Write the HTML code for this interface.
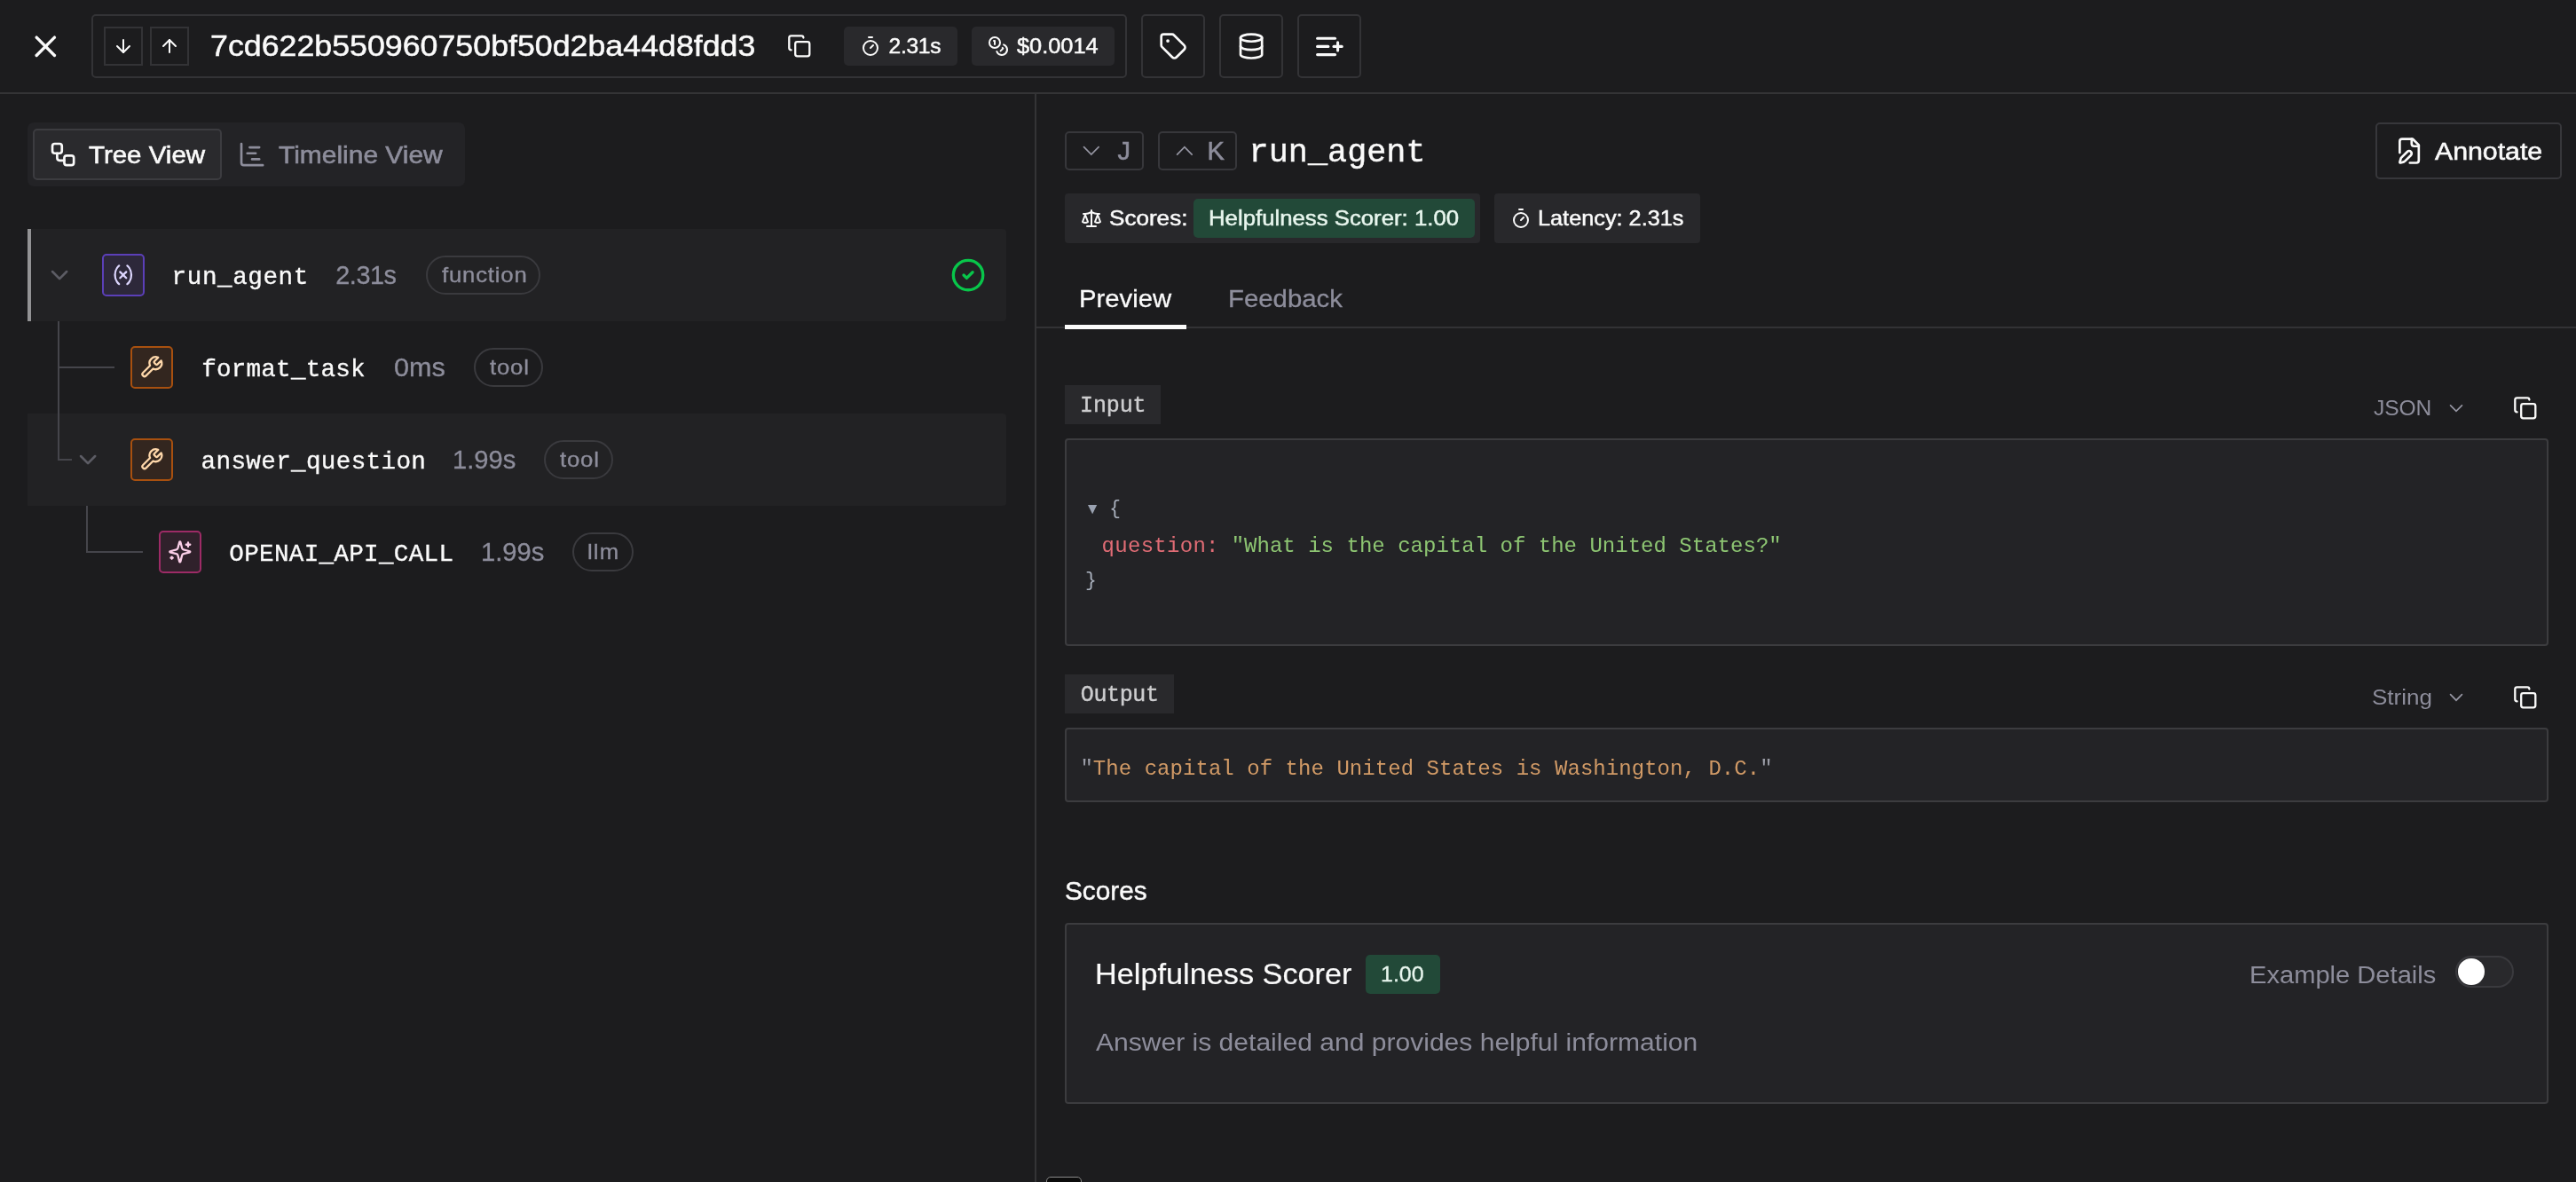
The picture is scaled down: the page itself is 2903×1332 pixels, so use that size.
<!DOCTYPE html>
<html lang="en"><head><meta charset="utf-8"><title>Trace</title><style>
html,body{margin:0;padding:0;background:#1c1c1e;}
body{width:2903px;height:1332px;position:relative;overflow:hidden;font-family:"Liberation Sans", sans-serif;}
header,nav,main{position:absolute;left:0;top:0;width:0;height:0}
.bx{position:absolute;box-sizing:border-box}
.ic{position:absolute;overflow:visible}
.t{position:absolute;white-space:pre;transform-origin:0 0;}
#txt{position:absolute;left:0;top:0;width:2903px;height:1332px;will-change:transform}
</style></head><body>
<header>
<svg class="ic" style="left:30.50px;top:31.70px;color:#fafafa" width="40.6" height="40.6" viewBox="0 0 24 24" fill="none" stroke="currentColor" stroke-width="2" stroke-linecap="round" stroke-linejoin="round"><path d="M18 6 6 18"/><path d="m6 6 12 12"/></svg>
<div class="bx" style="left:103.00px;top:16.00px;width:1167.00px;height:72.00px;border:2px solid #333336;border-radius:5px"></div>
<div class="bx" style="left:117.00px;top:30.00px;width:44.00px;height:44.00px;border:2px solid #333336"></div>
<div class="bx" style="left:169.00px;top:30.00px;width:44.00px;height:44.00px;border:2px solid #333336"></div>
<svg class="ic" style="left:126.80px;top:40.10px;color:#fafafa" width="24" height="24" viewBox="0 0 24 24" fill="none" stroke="currentColor" stroke-width="2" stroke-linecap="round" stroke-linejoin="round"><path d="M12 5v14"/><path d="m19 12-7 7-7-7"/></svg>
<svg class="ic" style="left:178.80px;top:40.10px;color:#fafafa" width="24" height="24" viewBox="0 0 24 24" fill="none" stroke="currentColor" stroke-width="2" stroke-linecap="round" stroke-linejoin="round"><path d="m5 12 7-7 7 7"/><path d="M12 19V5"/></svg>
<svg class="ic" style="left:886.70px;top:38.10px;color:#fafafa" width="27.6" height="27.6" viewBox="0 0 24 24" fill="none" stroke="currentColor" stroke-width="2" stroke-linecap="round" stroke-linejoin="round"><rect width="14" height="14" x="8" y="8" rx="2" ry="2"/><path d="M4 16c-1.1 0-2-.9-2-2V4c0-1.1.9-2 2-2h10c1.1 0 2 .9 2 2"/></svg>
<div class="bx" style="left:951.00px;top:30.00px;width:128.00px;height:44.00px;background:#29292c;border-radius:5px"></div>
<svg class="ic" style="left:968.70px;top:39.70px;color:#fafafa" width="24" height="24" viewBox="0 0 24 24" fill="none" stroke="currentColor" stroke-width="2" stroke-linecap="round" stroke-linejoin="round"><line x1="10" x2="14" y1="2" y2="2"/><line x1="12" x2="15" y1="14" y2="11"/><circle cx="12" cy="14" r="8"/></svg>
<div class="bx" style="left:1095.00px;top:30.00px;width:161.00px;height:44.00px;background:#29292c;border-radius:5px"></div>
<svg class="ic" style="left:1112.60px;top:40.00px;color:#fafafa" width="24" height="24" viewBox="0 0 24 24" fill="none" stroke="currentColor" stroke-width="2" stroke-linecap="round" stroke-linejoin="round"><circle cx="8" cy="8" r="6"/><path d="M18.09 10.37A6 6 0 1 1 10.34 18"/><path d="M7 6h1v4"/><path d="m16.71 13.88.7.71-2.82 2.82"/></svg>
<div class="bx" style="left:1286.00px;top:16.00px;width:72.00px;height:72.00px;border:2px solid #333336;border-radius:5px"></div>
<svg class="ic" style="left:1305.90px;top:35.90px;color:#fafafa" width="32.2" height="32.2" viewBox="0 0 24 24" fill="none" stroke="currentColor" stroke-width="2" stroke-linecap="round" stroke-linejoin="round"><path d="M12.586 2.586A2 2 0 0 0 11.172 2H4a2 2 0 0 0-2 2v7.172a2 2 0 0 0 .586 1.414l8.704 8.704a2.426 2.426 0 0 0 3.42 0l6.58-6.58a2.426 2.426 0 0 0 0-3.42z"/><circle cx="7.5" cy="7.5" r="1.4" fill="currentColor" stroke="none"/></svg>
<div class="bx" style="left:1374.00px;top:16.00px;width:72.00px;height:72.00px;border:2px solid #333336;border-radius:5px"></div>
<svg class="ic" style="left:1393.90px;top:35.90px;color:#fafafa" width="32.2" height="32.2" viewBox="0 0 24 24" fill="none" stroke="currentColor" stroke-width="2" stroke-linecap="round" stroke-linejoin="round"><ellipse cx="12" cy="5" rx="9" ry="3"/><path d="M3 5V19A9 3 0 0 0 21 19V5"/><path d="M3 12A9 3 0 0 0 21 12"/></svg>
<div class="bx" style="left:1462.00px;top:16.00px;width:72.00px;height:72.00px;border:2px solid #333336;border-radius:5px"></div>
<svg class="ic" style="left:1479.60px;top:33.60px;color:#fafafa" width="36.8" height="36.8" viewBox="0 0 24 24" fill="none" stroke="currentColor" stroke-width="2" stroke-linecap="round" stroke-linejoin="round"><path d="M11 12H3"/><path d="M16 6H3"/><path d="M16 18H3"/><path d="M18 9v6"/><path d="M21 12h-6"/></svg>
<div class="bx" style="left:0.00px;top:104.00px;width:2903.00px;height:2.00px;background:#343436"></div>
</header>
<nav>
<div class="bx" style="left:31.00px;top:138.00px;width:493.00px;height:72.00px;background:#232326;border-radius:7px"></div>
<div class="bx" style="left:37.00px;top:145.00px;width:213.00px;height:58.00px;background:#2a2a2d;border:2px solid #3c3c40;border-radius:5px"></div>
<svg class="ic" style="left:54.60px;top:158.00px;color:#fafafa" width="32.2" height="32.2" viewBox="0 0 24 24" fill="none" stroke="currentColor" stroke-width="2" stroke-linecap="round" stroke-linejoin="round"><rect width="8" height="8" x="3" y="3" rx="2"/><path d="M7 11v4a2 2 0 0 0 2 2h4"/><rect width="8" height="8" x="13" y="13" rx="2"/></svg>
<svg class="ic" style="left:268.20px;top:158.00px;color:#8d8d9b" width="32.2" height="32.2" viewBox="0 0 24 24" fill="none" stroke="currentColor" stroke-width="2" stroke-linecap="round" stroke-linejoin="round"><path d="M10 6h8"/><path d="M12 16h6"/><path d="M3 3v16a2 2 0 0 0 2 2h16"/><path d="M8 11h7"/></svg>
<div class="bx" style="left:31.00px;top:258.00px;width:1103.00px;height:104.00px;background:#222224;border-radius:0 4px 4px 0"></div>
<div class="bx" style="left:31.00px;top:258.00px;width:4.00px;height:104.00px;background:#939395"></div>
<div class="bx" style="left:31.00px;top:466.00px;width:1103.00px;height:104.00px;background:#222224;border-radius:0 4px 4px 0"></div>
<div class="bx" style="left:65.00px;top:362.00px;width:2.00px;height:156.80px;background:#45454b"></div>
<div class="bx" style="left:65.00px;top:413.00px;width:64.00px;height:2.00px;background:#45454b"></div>
<div class="bx" style="left:65.00px;top:516.60px;width:16.20px;height:2.20px;background:#45454b"></div>
<div class="bx" style="left:97.00px;top:570.00px;width:2.30px;height:53.00px;background:#45454b"></div>
<div class="bx" style="left:97.00px;top:620.80px;width:64.00px;height:2.20px;background:#45454b"></div>
<svg class="ic" style="left:50.90px;top:294.00px;color:#5c5c64" width="32.2" height="32.2" viewBox="0 0 24 24" fill="none" stroke="currentColor" stroke-width="2" stroke-linecap="round" stroke-linejoin="round"><path d="m6 9 6 6 6-6"/></svg>
<svg class="ic" style="left:82.90px;top:501.90px;color:#5c5c64" width="32.2" height="32.2" viewBox="0 0 24 24" fill="none" stroke="currentColor" stroke-width="2" stroke-linecap="round" stroke-linejoin="round"><path d="m6 9 6 6 6-6"/></svg>
<div class="bx" style="left:115.00px;top:286.00px;width:48.00px;height:48.00px;background:#2d283a;border:2.3px solid #5b3fb8;border-radius:5px"></div>
<svg class="ic" style="left:125.20px;top:296.20px;color:#ddd6fe" width="27.6" height="27.6" viewBox="0 0 24 24" fill="none" stroke="currentColor" stroke-width="2" stroke-linecap="round" stroke-linejoin="round"><path d="M8 21s-4-3-4-9 4-9 4-9"/><path d="M16 3s4 3 4 9-4 9-4 9"/><line x1="15" x2="9" y1="9" y2="15"/><line x1="9" x2="15" y1="9" y2="15"/></svg>
<div class="bx" style="left:147.00px;top:390.00px;width:48.00px;height:48.00px;background:#33261f;border:2.3px solid #a8500f;border-radius:5px"></div>
<svg class="ic" style="left:157.20px;top:400.20px;color:#fed7aa" width="27.6" height="27.6" viewBox="0 0 24 24" fill="none" stroke="currentColor" stroke-width="2" stroke-linecap="round" stroke-linejoin="round"><path d="M14.7 6.3a1 1 0 0 0 0 1.4l1.6 1.6a1 1 0 0 0 1.4 0l3.77-3.77a6 6 0 0 1-7.94 7.94l-6.91 6.91a2.12 2.12 0 0 1-3-3l6.91-6.91a6 6 0 0 1 7.94-7.94l-3.76 3.76z"/></svg>
<div class="bx" style="left:147.00px;top:494.00px;width:48.00px;height:48.00px;background:#33261f;border:2.3px solid #a8500f;border-radius:5px"></div>
<svg class="ic" style="left:157.20px;top:504.20px;color:#fed7aa" width="27.6" height="27.6" viewBox="0 0 24 24" fill="none" stroke="currentColor" stroke-width="2" stroke-linecap="round" stroke-linejoin="round"><path d="M14.7 6.3a1 1 0 0 0 0 1.4l1.6 1.6a1 1 0 0 0 1.4 0l3.77-3.77a6 6 0 0 1-7.94 7.94l-6.91 6.91a2.12 2.12 0 0 1-3-3l6.91-6.91a6 6 0 0 1 7.94-7.94l-3.76 3.76z"/></svg>
<div class="bx" style="left:179.00px;top:598.00px;width:48.00px;height:48.00px;background:#30212b;border:2.3px solid #9d2b66;border-radius:5px"></div>
<svg class="ic" style="left:189.20px;top:608.20px;color:#fbcfe8" width="27.6" height="27.6" viewBox="0 0 24 24" fill="none" stroke="currentColor" stroke-width="2" stroke-linecap="round" stroke-linejoin="round"><path d="M9.937 15.5A2 2 0 0 0 8.5 14.063l-6.135-1.582a.5.5 0 0 1 0-.962L8.5 9.936A2 2 0 0 0 9.937 8.5l1.582-6.135a.5.5 0 0 1 .963 0L14.063 8.5A2 2 0 0 0 15.5 9.937l6.135 1.581a.5.5 0 0 1 0 .964L15.5 14.063a2 2 0 0 0-1.437 1.437l-1.582 6.135a.5.5 0 0 1-.963 0z"/><path d="M20 3v4"/><path d="M22 5h-4"/><path d="M4 17v2"/><path d="M5 18H3"/></svg>
<div class="bx" style="left:480.40px;top:288.00px;width:129.10px;height:44.00px;border:2px solid #3a3a3e;border-radius:22px"></div>
<div class="bx" style="left:534.20px;top:392.00px;width:78.20px;height:44.00px;border:2px solid #3a3a3e;border-radius:22px"></div>
<div class="bx" style="left:613.40px;top:496.00px;width:77.90px;height:44.00px;border:2px solid #3a3a3e;border-radius:22px"></div>
<div class="bx" style="left:645.30px;top:600.00px;width:69.00px;height:44.00px;border:2px solid #3a3a3e;border-radius:22px"></div>
<svg class="ic" style="left:1071.15px;top:289.75px;color:#08c64a" width="40.1" height="40.1" viewBox="0 0 24 24" fill="none" stroke="currentColor" stroke-width="2" stroke-linecap="round" stroke-linejoin="round"><circle cx="12" cy="12" r="10"/><path d="m9 12 2 2 4-4"/></svg>
<div class="bx" style="left:1166.00px;top:106.00px;width:2.00px;height:1226.00px;background:#343436"></div>
</nav>
<main>
<div class="bx" style="left:1200.00px;top:148.00px;width:89.00px;height:44.00px;border:2px solid #37373b;border-radius:5px"></div>
<div class="bx" style="left:1305.00px;top:148.00px;width:89.00px;height:44.00px;border:2px solid #37373b;border-radius:5px"></div>
<svg class="ic" style="left:0;top:0" width="2903" height="1332" viewBox="0 0 2903 1332" fill="none" stroke="#9595a2" stroke-width="1.7" stroke-linecap="round" stroke-linejoin="miter"><path d="M1221.50 165.65 1229.80 174.15 1238.10 165.65"/></svg>
<svg class="ic" style="left:0;top:0" width="2903" height="1332" viewBox="0 0 2903 1332" fill="none" stroke="#9595a2" stroke-width="1.7" stroke-linecap="round" stroke-linejoin="miter"><path d="M1326.60 174.15 1334.90 165.65 1343.20 174.15"/></svg>
<div class="bx" style="left:2677.00px;top:138.00px;width:210.00px;height:64.00px;border:2px solid #37373b;border-radius:5px"></div>
<svg class="ic" style="left:2698.80px;top:154.20px;color:#fafafa" width="32.2" height="32.2" viewBox="0 0 24 24" fill="none" stroke="currentColor" stroke-width="2" stroke-linecap="round" stroke-linejoin="round"><path d="M12.5 22H18a2 2 0 0 0 2-2V7l-5-5H6a2 2 0 0 0-2 2v9.5"/><path d="M14 2v4a2 2 0 0 0 2 2h4"/><path d="M13.378 15.626a1 1 0 1 0-3.004-3.004l-5.01 5.012a2 2 0 0 0-.506.854l-.837 2.87a.5.5 0 0 0 .62.62l2.87-.837a2 2 0 0 0 .854-.506z"/></svg>
<div class="bx" style="left:1200.00px;top:218.00px;width:468.00px;height:56.00px;background:#28282b;border-radius:4px"></div>
<svg class="ic" style="left:1217.80px;top:234.30px;color:#fafafa" width="24" height="24" viewBox="0 0 24 24" fill="none" stroke="currentColor" stroke-width="2" stroke-linecap="round" stroke-linejoin="round"><path d="m16 16 3-8 3 8c-.87.65-1.92 1-3 1s-2.13-.35-3-1Z"/><path d="m2 16 3-8 3 8c-.87.65-1.92 1-3 1s-2.13-.35-3-1Z"/><path d="M7 21h10"/><path d="M12 3v18"/><path d="M3 7h2c2 0 5-1 7-2 2 1 5 2 7 2h2"/></svg>
<div class="bx" style="left:1345.20px;top:224.00px;width:316.50px;height:44.00px;background:#224938;border-radius:5px"></div>
<div class="bx" style="left:1684.00px;top:218.00px;width:232.00px;height:56.00px;background:#28282b;border-radius:4px"></div>
<svg class="ic" style="left:1702.00px;top:234.00px;color:#fafafa" width="24" height="24" viewBox="0 0 24 24" fill="none" stroke="currentColor" stroke-width="2" stroke-linecap="round" stroke-linejoin="round"><line x1="10" x2="14" y1="2" y2="2"/><line x1="12" x2="15" y1="14" y2="11"/><circle cx="12" cy="14" r="8"/></svg>
<div class="bx" style="left:1168.00px;top:368.00px;width:1735.00px;height:2.00px;background:#323235"></div>
<div class="bx" style="left:1200.00px;top:366.40px;width:137.00px;height:4.60px;background:#fafafa"></div>
<div class="bx" style="left:1200.00px;top:434.00px;width:108.00px;height:44.00px;background:#29292c"></div>
<svg class="ic" style="left:0;top:0" width="2903" height="1332" viewBox="0 0 2903 1332" fill="none" stroke="#9595a2" stroke-width="1.7" stroke-linecap="round" stroke-linejoin="miter"><path d="M2761.55 456.80 2768.00 463.40 2774.45 456.80"/></svg>
<svg class="ic" style="left:2832.30px;top:446.30px;color:#fafafa" width="27.6" height="27.6" viewBox="0 0 24 24" fill="none" stroke="currentColor" stroke-width="2" stroke-linecap="round" stroke-linejoin="round"><rect width="14" height="14" x="8" y="8" rx="2" ry="2"/><path d="M4 16c-1.1 0-2-.9-2-2V4c0-1.1.9-2 2-2h10c1.1 0 2 .9 2 2"/></svg>
<div class="bx" style="left:1200.00px;top:494.00px;width:1672.00px;height:234.00px;background:#232326;border:2px solid #3c3c3f;border-radius:4px"></div>
<div class="bx" style="left:1200.00px;top:760.00px;width:123.00px;height:44.00px;background:#29292c"></div>
<svg class="ic" style="left:0;top:0" width="2903" height="1332" viewBox="0 0 2903 1332" fill="none" stroke="#9595a2" stroke-width="1.7" stroke-linecap="round" stroke-linejoin="miter"><path d="M2761.55 782.60 2768.00 789.20 2774.45 782.60"/></svg>
<svg class="ic" style="left:2832.30px;top:772.20px;color:#fafafa" width="27.6" height="27.6" viewBox="0 0 24 24" fill="none" stroke="currentColor" stroke-width="2" stroke-linecap="round" stroke-linejoin="round"><rect width="14" height="14" x="8" y="8" rx="2" ry="2"/><path d="M4 16c-1.1 0-2-.9-2-2V4c0-1.1.9-2 2-2h10c1.1 0 2 .9 2 2"/></svg>
<div class="bx" style="left:1200.00px;top:820.00px;width:1672.00px;height:84.00px;background:#232326;border:2px solid #3c3c3f;border-radius:4px"></div>
<div class="bx" style="left:1200.00px;top:1040.00px;width:1672.00px;height:204.00px;background:#232326;border:2px solid #3c3c3f;border-radius:4px"></div>
<div class="bx" style="left:1539.10px;top:1076.20px;width:83.90px;height:43.60px;background:#224938;border-radius:5px"></div>
<div class="bx" style="left:2766.90px;top:1077.10px;width:65.90px;height:35.80px;background:#29292c;border:2.3px solid #3a3a3e;border-radius:18px"></div>
<div class="bx" style="left:2769.70px;top:1079.90px;width:30.50px;height:30.30px;background:#fff;border-radius:50%"></div>
<div class="bx" style="left:1179.00px;top:1326.00px;width:40.00px;height:19.00px;background:#0b0b0b;border:1.4px solid #8a8a8a;border-radius:5px"></div>
</main>
<div id="txt">
<span class="t" style="left:236.52px;top:34.90px;font:400 33.2px/33.2px 'Liberation Sans', sans-serif;color:#fafafa;letter-spacing:0.000px;transform:scaleX(1.0773);-webkit-text-stroke:0.5px #fafafa;">7cd622b550960750bf50d2ba44d8fdd3</span>
<span class="t" style="left:1001.50px;top:39.70px;font:400 24.6px/24.6px 'Liberation Sans', sans-serif;color:#fafafa;letter-spacing:-0.295px;-webkit-text-stroke:0.5px #fafafa;">2.31s</span>
<span class="t" style="left:1145.99px;top:39.70px;font:400 24.6px/24.6px 'Liberation Sans', sans-serif;color:#fafafa;letter-spacing:0.000px;transform:scaleX(1.0313);-webkit-text-stroke:0.5px #fafafa;">$0.0014</span>
<span class="t" style="left:99.84px;top:160.10px;font:400 28.4px/28.4px 'Liberation Sans', sans-serif;color:#fafafa;letter-spacing:0.000px;transform:scaleX(1.0382);-webkit-text-stroke:0.6px #fafafa;">Tree View</span>
<span class="t" style="left:313.63px;top:160.10px;font:400 28.4px/28.4px 'Liberation Sans', sans-serif;color:#8d8d9b;letter-spacing:0.000px;transform:scaleX(1.0548);-webkit-text-stroke:0.6px #8d8d9b;">Timeline View</span>
<span class="t" style="left:193.58px;top:298.60px;font:400 27.6px/27.6px 'Liberation Mono', monospace;color:#fafafa;letter-spacing:0.590px;-webkit-text-stroke:0.35px #fafafa;">run_agent</span>
<span class="t" style="left:378.25px;top:295.60px;font:400 28.8px/28.8px 'Liberation Sans', sans-serif;color:#8d8d9b;letter-spacing:-0.426px;-webkit-text-stroke:0.3px #8d8d9b;">2.31s</span>
<span class="t" style="left:497.58px;top:298.20px;font:400 23.8px/23.8px 'Liberation Sans', sans-serif;color:#8d8d9b;letter-spacing:0.748px;transform:scaleX(1.0800);-webkit-text-stroke:0.35px #8d8d9b;">function</span>
<span class="t" style="left:227.18px;top:402.60px;font:400 27.6px/27.6px 'Liberation Mono', monospace;color:#fafafa;letter-spacing:0.227px;-webkit-text-stroke:0.35px #fafafa;">format_task</span>
<span class="t" style="left:443.74px;top:399.60px;font:400 28.8px/28.8px 'Liberation Sans', sans-serif;color:#8d8d9b;letter-spacing:0.000px;transform:scaleX(1.0626);-webkit-text-stroke:0.3px #8d8d9b;">0ms</span>
<span class="t" style="left:551.88px;top:402.20px;font:400 23.8px/23.8px 'Liberation Sans', sans-serif;color:#8d8d9b;letter-spacing:0.770px;transform:scaleX(1.0800);-webkit-text-stroke:0.35px #8d8d9b;">tool</span>
<span class="t" style="left:226.58px;top:506.60px;font:400 27.6px/27.6px 'Liberation Mono', monospace;color:#fafafa;letter-spacing:0.351px;-webkit-text-stroke:0.35px #fafafa;">answer_question</span>
<span class="t" style="left:509.68px;top:503.60px;font:400 28.8px/28.8px 'Liberation Sans', sans-serif;color:#8d8d9b;letter-spacing:0.000px;transform:scaleX(1.0125);-webkit-text-stroke:0.3px #8d8d9b;">1.99s</span>
<span class="t" style="left:631.08px;top:506.20px;font:400 23.8px/23.8px 'Liberation Sans', sans-serif;color:#8d8d9b;letter-spacing:0.770px;transform:scaleX(1.0800);-webkit-text-stroke:0.35px #8d8d9b;">tool</span>
<span class="t" style="left:258.31px;top:610.60px;font:400 27.6px/27.6px 'Liberation Mono', monospace;color:#fafafa;letter-spacing:0.309px;-webkit-text-stroke:0.35px #fafafa;">OPENAI_API_CALL</span>
<span class="t" style="left:541.68px;top:607.60px;font:400 28.8px/28.8px 'Liberation Sans', sans-serif;color:#8d8d9b;letter-spacing:0.000px;transform:scaleX(1.0125);-webkit-text-stroke:0.3px #8d8d9b;">1.99s</span>
<span class="t" style="left:662.27px;top:610.20px;font:400 23.8px/23.8px 'Liberation Sans', sans-serif;color:#8d8d9b;letter-spacing:1.038px;transform:scaleX(1.0800);-webkit-text-stroke:0.35px #8d8d9b;">llm</span>
<span class="t" style="left:1259.53px;top:156.30px;font:400 29px/29px 'Liberation Sans', sans-serif;color:#8d8d9b;letter-spacing:0.000px;-webkit-text-stroke:0.6px #8d8d9b;">J</span>
<span class="t" style="left:1360.55px;top:156.30px;font:400 29px/29px 'Liberation Sans', sans-serif;color:#8d8d9b;letter-spacing:0.000px;-webkit-text-stroke:0.6px #8d8d9b;">K</span>
<span class="t" style="left:1407.57px;top:154.40px;font:400 36.8px/36.8px 'Liberation Mono', monospace;color:#fafafa;letter-spacing:0.032px;-webkit-text-stroke:0.4px #fafafa;">run_agent</span>
<span class="t" style="left:2744.10px;top:155.70px;font:400 28.4px/28.4px 'Liberation Sans', sans-serif;color:#fafafa;letter-spacing:0.000px;transform:scaleX(1.0662);-webkit-text-stroke:0.6px #fafafa;">Annotate</span>
<span class="t" style="left:1250.23px;top:233.80px;font:400 24.6px/24.6px 'Liberation Sans', sans-serif;color:#fafafa;letter-spacing:-0.000px;transform:scaleX(1.0604);-webkit-text-stroke:0.5px #fafafa;">Scores:</span>
<span class="t" style="left:1361.81px;top:233.80px;font:400 24.6px/24.6px 'Liberation Sans', sans-serif;color:#e8f6ee;letter-spacing:0.000px;transform:scaleX(1.0473);-webkit-text-stroke:0.5px #e8f6ee;">Helpfulness Scorer: 1.00</span>
<span class="t" style="left:1732.94px;top:233.80px;font:400 24.6px/24.6px 'Liberation Sans', sans-serif;color:#fafafa;letter-spacing:0.000px;transform:scaleX(1.0279);-webkit-text-stroke:0.5px #fafafa;">Latency: 2.31s</span>
<span class="t" style="left:1215.61px;top:321.90px;font:400 28.4px/28.4px 'Liberation Sans', sans-serif;color:#fafafa;letter-spacing:-0.000px;transform:scaleX(1.0309);-webkit-text-stroke:0.3px #fafafa;">Preview</span>
<span class="t" style="left:1384.20px;top:321.90px;font:400 28.4px/28.4px 'Liberation Sans', sans-serif;color:#8d8d9b;letter-spacing:0.000px;transform:scaleX(1.0346);-webkit-text-stroke:0.3px #8d8d9b;">Feedback</span>
<span class="t" style="left:1217.10px;top:445.40px;font:400 25px/25px 'Liberation Mono', monospace;color:#cdcdcf;letter-spacing:-0.127px;-webkit-text-stroke:0.4px #cdcdcf;">Input</span>
<span class="t" style="left:2674.90px;top:448.00px;font:400 24.6px/24.6px 'Liberation Sans', sans-serif;color:#8d8d9b;letter-spacing:-0.048px;">JSON</span>
<span class="t" style="left:1222.45px;top:564.80px;font:400 17.4px/17.4px 'Liberation Sans', sans-serif;color:#9aa2b1;letter-spacing:0.000px;">▼</span>
<span class="t" style="left:1250.30px;top:563.00px;font:400 21.2px/21.2px 'Liberation Mono', monospace;color:#abb2bf;letter-spacing:0.000px;">{</span>
<span class="t" style="left:1241.60px;top:603.90px;font:400 24px/24px 'Liberation Mono', monospace;color:#e06c75;letter-spacing:0.285px;">question:</span>
<span class="t" style="left:1387.70px;top:603.90px;font:400 24px/24px 'Liberation Mono', monospace;color:#8dc572;letter-spacing:0.017px;">&quot;What is the capital of the United States?&quot;</span>
<span class="t" style="left:1223.05px;top:643.50px;font:400 21.2px/21.2px 'Liberation Mono', monospace;color:#abb2bf;letter-spacing:0.000px;">}</span>
<span class="t" style="left:1217.80px;top:771.40px;font:400 25px/25px 'Liberation Mono', monospace;color:#cdcdcf;letter-spacing:-0.382px;-webkit-text-stroke:0.4px #cdcdcf;">Output</span>
<span class="t" style="left:2672.54px;top:773.60px;font:400 24.6px/24.6px 'Liberation Sans', sans-serif;color:#8d8d9b;letter-spacing:-0.000px;transform:scaleX(1.0588);">String</span>
<span class="t" style="left:1217.40px;top:855.00px;font:400 24px/24px 'Liberation Mono', monospace;color:#d19a66;letter-spacing:0.047px;"><span style="color:#9a9ca6">&quot;</span>The capital of the United States is Washington, D.C.<span style="color:#9a9ca6">&quot;</span></span>
<span class="t" style="left:1200.27px;top:989.30px;font:400 29.6px/29.6px 'Liberation Sans', sans-serif;color:#fafafa;letter-spacing:0.000px;transform:scaleX(1.0058);-webkit-text-stroke:0.45px #fafafa;">Scores</span>
<span class="t" style="left:1233.52px;top:1081.40px;font:400 33px/33px 'Liberation Sans', sans-serif;color:#fafafa;letter-spacing:0.000px;transform:scaleX(1.0382);-webkit-text-stroke:0.2px #fafafa;">Helpfulness Scorer</span>
<span class="t" style="left:1555.97px;top:1086.10px;font:400 24.6px/24.6px 'Liberation Sans', sans-serif;color:#e8f6ee;letter-spacing:0.000px;transform:scaleX(1.0155);-webkit-text-stroke:0.3px #e8f6ee;">1.00</span>
<span class="t" style="left:1235.10px;top:1160.10px;font:400 28.4px/28.4px 'Liberation Sans', sans-serif;color:#8d8d9b;letter-spacing:0.000px;transform:scaleX(1.0586);">Answer is detailed and provides helpful information</span>
<span class="t" style="left:2535.33px;top:1083.60px;font:400 28.4px/28.4px 'Liberation Sans', sans-serif;color:#8d8d9b;letter-spacing:-0.000px;transform:scaleX(1.0253);">Example Details</span>
</div>
</body></html>
